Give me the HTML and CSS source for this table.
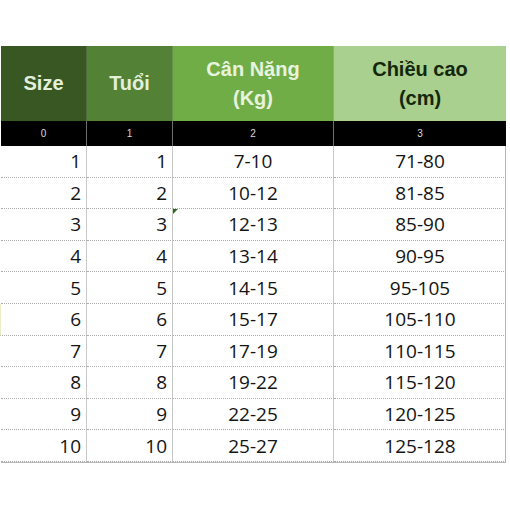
FILE: index.html
```html
<!DOCTYPE html>
<html lang="vi">
<head>
<meta charset="utf-8">
<title>Size chart</title>
<link rel="stylesheet" href="styles.css">
</head>
<body>
<div class="sheet">
  <div class="grid">
    <div class="hd c1">Size</div>
    <div class="hd c2">Tuổi</div>
    <div class="hd c3">Cân Nặng<br>(Kg)</div>
    <div class="hd c4">Chiều cao<br>(cm)</div>

    <div class="idx">0</div>
    <div class="idx">1</div>
    <div class="idx">2</div>
    <div class="idx">3</div>

    <div class="cell num">1</div><div class="cell num">1</div><div class="cell mid">7-10</div><div class="cell mid">71-80</div>
    <div class="cell num">2</div><div class="cell num">2</div><div class="cell mid">10-12</div><div class="cell mid">81-85</div>
    <div class="cell num">3</div><div class="cell num">3</div><div class="cell mid flag">12-13</div><div class="cell mid">85-90</div>
    <div class="cell num">4</div><div class="cell num">4</div><div class="cell mid">13-14</div><div class="cell mid">90-95</div>
    <div class="cell num">5</div><div class="cell num">5</div><div class="cell mid">14-15</div><div class="cell mid">95-105</div>
    <div class="cell num mark">6</div><div class="cell num">6</div><div class="cell mid">15-17</div><div class="cell mid">105-110</div>
    <div class="cell num">7</div><div class="cell num">7</div><div class="cell mid">17-19</div><div class="cell mid">110-115</div>
    <div class="cell num">8</div><div class="cell num">8</div><div class="cell mid">19-22</div><div class="cell mid">115-120</div>
    <div class="cell num">9</div><div class="cell num">9</div><div class="cell mid">22-25</div><div class="cell mid">120-125</div>
    <div class="cell num">10</div><div class="cell num">10</div><div class="cell mid">25-27</div><div class="cell mid">125-128</div>
  </div>
</div>
</body>
</html>
```

FILE: styles.css
```css
html, body {
  margin: 0;
  padding: 0;
  background: #ffffff;
}

.sheet {
  padding: 46px 0 0 1px;
}

.grid {
  display: grid;
  grid-template-columns: 86px 86px 161px 172px;
  grid-template-rows: 75px 25px repeat(10, 31.6px);
  width: 505px;
  border-right: 1px solid #b5b5b5;
  border-bottom: 1px solid #b5b5b5;
  box-sizing: border-box;
}

.hd {
  display: flex;
  align-items: center;
  justify-content: center;
  text-align: center;
  font-family: "Liberation Sans", Arial, sans-serif;
  font-weight: bold;
  font-size: 20px;
  line-height: 29px;
  color: #e4f0dc;
  border-right: 1px solid rgba(255,255,255,0.12);
}

.c1 { background: #385723; }
.c2 { background: #538135; }
.c3 { background: #70ad47; color: #e8f3df; }
.c4 { background: #a9d08e; color: #14270b; border-right: none; }

.idx {
  background: #000000;
  color: #d9d9d9;
  font-family: "Liberation Sans", Arial, sans-serif;
  font-size: 10px;
  display: flex;
  align-items: center;
  justify-content: center;
  border-right: 1px solid #6e6e6e;
}

.idx:nth-child(8) {
  border-right: none;
}

.cell {
  font-family: "Open Sans", "Noto Sans", sans-serif;
  font-size: 19px;
  color: #141414;
  display: flex;
  align-items: center;
  border-right: 1px solid #c8c8c8;
  border-bottom: 1px dotted #ababab;
  box-sizing: border-box;
  position: relative;
}

.cell:nth-child(4n) {
  border-right: none;
}

.num {
  justify-content: flex-end;
  padding-right: 5px;
}

.mid {
  justify-content: center;
}

.flag::before {
  content: "";
  position: absolute;
  left: 0;
  top: 0;
  border-top: 5px solid #2e6b1e;
  border-right: 5px solid transparent;
}

.mark {
  border-left: 1px solid #e6efc4;
  margin-left: -1px;
}
```
